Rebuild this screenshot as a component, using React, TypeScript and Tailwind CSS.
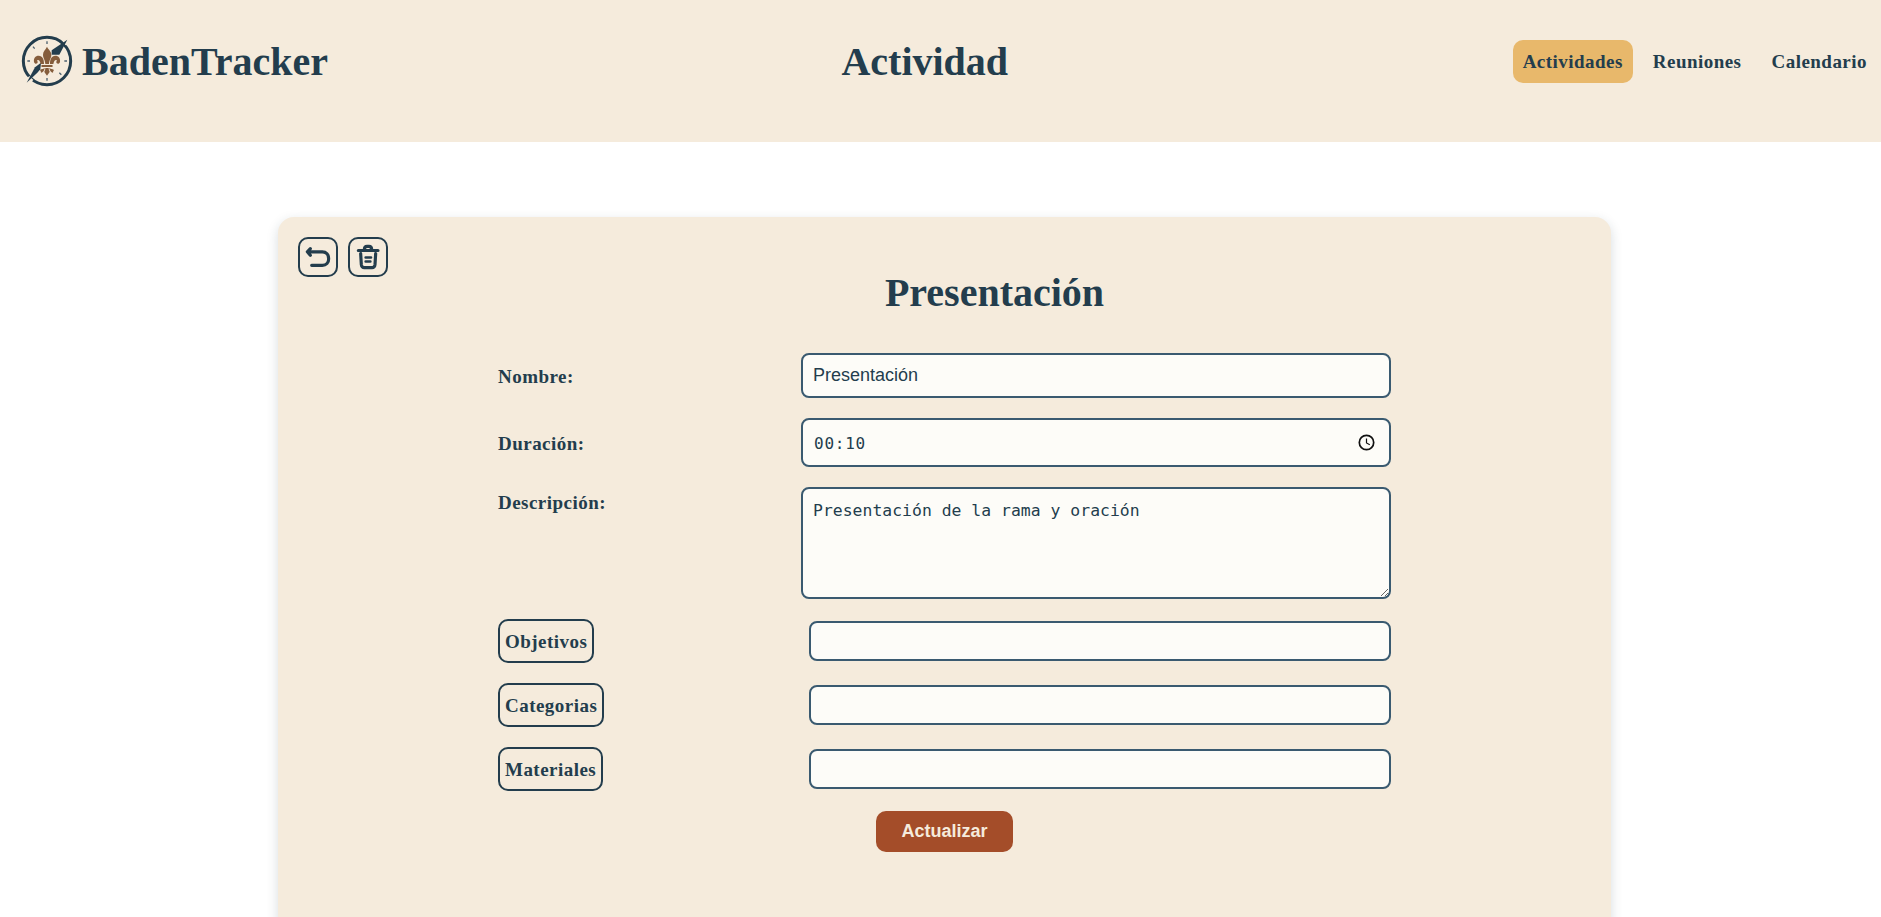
import type { ReactNode } from "react";

function Logo() {
  return (
    <svg viewBox="63 45 156 156" className="size-[52px] shrink-0">
      <circle cx="141" cy="123" r="71" fill="none" stroke="#233d4d" strokeWidth="9" />
      <path d="M188 62L201 50L209 62L196 76ZM76 180L88 168L100 180L84 196Z" fill="#f5ebdc" />
      <path d="M141 64v8M141 174v8M82 123h8M193 123h8M99 80l5 6M178 158l6 6" stroke="#4d6270" strokeWidth="4" />
      <path d="M202 59L155 91V104H178Z" fill="#233d4d" />
      <path d="M80 188L105 142L123 128L121 148L112 158Z" fill="#233d4d" />
      <g fill="#855d3c">
        <path d="M141 80C136 90 129 94 129 104C129 114 135 119 136 132H147C148 119 154 114 154 104C154 94 146 90 141 80Z" />
        <path d="M132 132C132 118 128 107 116 107C106 107 100 115 102 126C104 133 112 133 113 127C113 123 111 122 112 120C119 119 120 125 122 132Z" />
        <path d="M150 132C150 118 154 107 166 107C176 107 182 115 180 126C178 133 170 133 169 127C169 123 171 122 170 120C163 119 162 125 160 132Z" />
        <rect x="124" y="135" width="34" height="6" rx="2" />
        <path d="M136 144H146C146 152 149 152 149 156L141 167L133 156C133 152 136 152 136 144Z" />
        <path d="M133 144C130 149 125 146 120 150C122 153 123 155 123 158C129 158 133 152 134 144ZM149 144C152 149 157 146 162 150C160 153 159 155 159 158C153 158 149 152 148 144Z" />
      </g>
    </svg>
  );
}

function NavLink({ children, active = false }: { children: ReactNode; active?: boolean }) {
  return (
    <a
      className={
        active
          ? "rounded-[10px] bg-[#e8b86b] px-[10px] py-[10px] text-[19px] leading-[23px] font-bold tracking-[0.47px]"
          : "rounded-[10px] px-[10px] py-[10px] text-[19px] leading-[23px] font-bold tracking-[0.47px]"
      }
    >
      {children}
    </a>
  );
}

function IconButton({ label, children }: { label: string; children: ReactNode }) {
  return (
    <button aria-label={label} className="size-10 shrink-0 rounded-[10px] border-2 border-[#233d4d]">
      {children}
    </button>
  );
}

const fieldBox = "rounded-lg border-2 border-[#3a5a70] bg-[#fdfcf8]";
const labelText = "text-[19px] font-bold tracking-[0.47px]";

function PickerRow({ label }: { label: string }) {
  return (
    <div className="flex h-11 items-center justify-between">
      <button className={`h-11 rounded-[10px] border-2 border-[#233d4d] px-[5px] pt-[2px] ${labelText}`}>{label}</button>
      <input aria-label={label} className={`h-10 w-[582px] ${fieldBox}`} />
    </div>
  );
}

export default function App() {
  return (
    <div className="h-[917px] overflow-hidden bg-white font-['Liberation_Serif',serif] text-[#233d4d]">
      <header className="flex h-[142px] items-start justify-between bg-[#f5ebdc] pr-1 pl-[21px]">
        <div className="flex items-center gap-[9px] pt-[35px] pr-[9px]">
          <Logo />
          <span className="pt-[2px] text-[40px] leading-[50px] font-bold">BadenTracker</span>
        </div>
        <h1 className="pt-[36px] text-[40px] leading-[52px] font-bold">Actividad</h1>
        <nav className="flex justify-end gap-[10px] pt-[40px]">
          <NavLink active>Actividades</NavLink>
          <NavLink>Reuniones</NavLink>
          <NavLink>Calendario</NavLink>
        </nav>
      </header>

      <main className="mt-[75px] ml-[278px] h-[800px] w-[1333px] rounded-[16px] bg-[#f5ebdc] p-5 shadow-[0_4px_12px_rgba(35,61,77,0.18)]">
        <div className="flex h-[116px] gap-[10px]">
          <IconButton label="Volver">
            <svg viewBox="120 117 108 108" className="size-9" fill="none" stroke="#233d4d" strokeWidth="9.5" strokeLinecap="round" strokeLinejoin="round">
              <path d="M151 146L142 155.500L151 166M143 155.500H187C199 155.500 206 164 206 176C206 188 199 196 187 196H155" />
            </svg>
          </IconButton>
          <IconButton label="Eliminar">
            <svg viewBox="270 117 108 108" className="size-9" fill="none" stroke="#233d4d" strokeWidth="9.5" strokeLinecap="round" strokeLinejoin="round">
              <path d="M295 151.500H354M313 149C313 141 316 139 321 139H327C332 139 335 141 335 149M302 161L304 194Q305 203 313 203H336Q344 203 345 194L347 161" />
              <path d="M317 172.500H333M317 184.500H331" strokeWidth="8" />
            </svg>
          </IconButton>
          <h2 className="flex-1 pt-[33px] text-center text-[40px] leading-[46px] font-bold">Presentación</h2>
        </div>

        <form className="mx-auto flex w-[893px] flex-col gap-5">
          <div className="flex h-[45px] items-center justify-between">
            <label className={`pt-[3px] ${labelText}`}>Nombre:</label>
            <input
              aria-label="Nombre"
              defaultValue="Presentación"
              className={`h-[45px] w-[590px] px-[10px] font-['Liberation_Sans',sans-serif] text-[18px] ${fieldBox}`}
            />
          </div>
          <div className="flex h-[49px] items-center justify-between">
            <label className={`pt-[3px] ${labelText}`}>Duración:</label>
            <div className={`flex h-[49px] w-[590px] items-center justify-between pr-[14px] pl-[11px] ${fieldBox}`}>
              <span className="pt-[2px] font-['DejaVu_Sans_Mono',monospace] text-[16px] tracking-[0.75px]">00:10</span>
              <svg viewBox="0 0 18 18" className="size-[18px]" fill="none" stroke="#111">
                <circle cx="9.500" cy="8.500" r="7.200" strokeWidth="1.700" />
                <path d="M9.500 4.500V9L12.800 10.800" strokeWidth="1.200" />
              </svg>
            </div>
          </div>
          <div className="flex h-[112px] items-start justify-between">
            <label className={`leading-[31px] ${labelText}`}>Descripción:</label>
            <textarea
              aria-label="Descripción"
              defaultValue="Presentación de la rama y oración"
              className={`h-[112px] w-[590px] px-[10px] pt-[11px] font-['DejaVu_Sans_Mono',monospace] text-[16.4px] leading-[22px] tracking-[0.03px] ${fieldBox}`}
            />
          </div>
          <PickerRow label="Objetivos" />
          <PickerRow label="Categorias" />
          <PickerRow label="Materiales" />
          <button
            type="button"
            className="h-[41px] w-[137px] self-center rounded-[10px] bg-[#a44d29] font-['Liberation_Sans',sans-serif] text-[18px] font-bold text-[#f5ebdc]"
          >
            Actualizar
          </button>
        </form>
      </main>
    </div>
  );
}
